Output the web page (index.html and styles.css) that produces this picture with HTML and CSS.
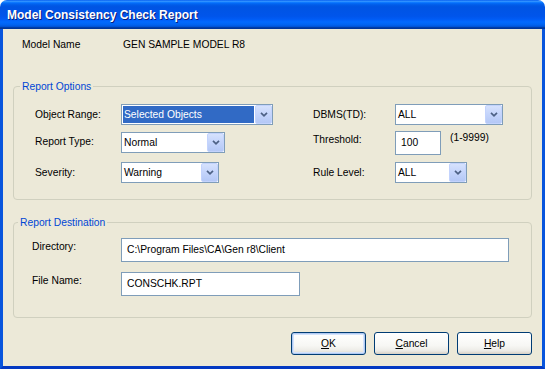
FILE: index.html
```html
<!DOCTYPE html>
<html>
<head>
    <meta charset="UTF-8">
    <title>Model Consistency Check Report</title>
    <link rel="stylesheet" href="styles.css">
</head>
<body>
    <div class="window">
        <div class="titlebar">
            <span class="title">Model Consistency Check Report</span>
        </div>
        <div class="client">
            <div class="model-row">
                <span class="model-label">Model Name</span>
                <span class="model-value">GEN SAMPLE MODEL R8</span>
            </div>

            <fieldset class="group options">
                <legend>Report Options</legend>
                <div class="options-grid">
                    <label class="lbl">Object Range:</label>
                    <div class="cell">
                        <div class="combo w-range">
                            <span class="value selected">Selected Objects</span>
                            <span class="arrow"><svg width="8" height="5" viewBox="0 0 8 5"><path d="M1 0.8L4 3.8L7 0.8" fill="none" stroke="#4D6185" stroke-width="1.7"/></svg></span>
                        </div>
                    </div>
                    <label class="lbl">DBMS(TD):</label>
                    <div class="cell">
                        <div class="combo w-dbms">
                            <span class="value">ALL</span>
                            <span class="arrow"><svg width="8" height="5" viewBox="0 0 8 5"><path d="M1 0.8L4 3.8L7 0.8" fill="none" stroke="#4D6185" stroke-width="1.7"/></svg></span>
                        </div>
                    </div>

                    <label class="lbl">Report Type:</label>
                    <div class="cell">
                        <div class="combo w-type down">
                            <span class="value">Normal</span>
                            <span class="arrow"><svg width="8" height="5" viewBox="0 0 8 5"><path d="M1 0.8L4 3.8L7 0.8" fill="none" stroke="#4D6185" stroke-width="1.7"/></svg></span>
                        </div>
                    </div>
                    <label class="lbl thr">Threshold:</label>
                    <div class="cell thr-cell">
                        <div class="edit w-thr">100</div>
                        <span class="range">(1-9999)</span>
                    </div>

                    <label class="lbl">Severity:</label>
                    <div class="cell">
                        <div class="combo w-sev">
                            <span class="value">Warning</span>
                            <span class="arrow"><svg width="8" height="5" viewBox="0 0 8 5"><path d="M1 0.8L4 3.8L7 0.8" fill="none" stroke="#4D6185" stroke-width="1.7"/></svg></span>
                        </div>
                    </div>
                    <label class="lbl">Rule Level:</label>
                    <div class="cell">
                        <div class="combo w-rule">
                            <span class="value">ALL</span>
                            <span class="arrow"><svg width="8" height="5" viewBox="0 0 8 5"><path d="M1 0.8L4 3.8L7 0.8" fill="none" stroke="#4D6185" stroke-width="1.7"/></svg></span>
                        </div>
                    </div>
                </div>
            </fieldset>

            <fieldset class="group dest">
                <legend>Report Destination</legend>
                <div class="dest-grid">
                    <label class="lbl">Directory:</label>
                    <div class="edit w-dir">C:\Program Files\CA\Gen r8\Client</div>
                    <label class="lbl">File Name:</label>
                    <div class="edit w-file">CONSCHK.RPT</div>
                </div>
            </fieldset>

            <div class="buttons">
                <button class="btn default"><u>O</u>K</button>
                <button class="btn"><u>C</u>ancel</button>
                <button class="btn"><u>H</u>elp</button>
            </div>
        </div>
    </div>
</body>
</html>
```

FILE: styles.css
```css
body {
    margin: 0;
    background-color: #ffffff;
    font-family: "Liberation Sans", Arial, sans-serif;
    font-size: 10.3px;
    color: #000000;
}

.window {
    width: 545px;
    height: 369px;
    display: flex;
    flex-direction: column;
}

.titlebar {
    flex: none;
    height: 29px;
    display: flex;
    align-items: center;
    padding-left: 7px;
    border-radius: 7px 7px 0 0;
    background: linear-gradient(to bottom, #0058ee 0%, #3593ff 4%, #288eff 6%, #127dff 8%, #036ffc 10%, #0262ee 14%, #0057e5 20%, #0054e3 24%, #0055eb 56%, #005bf5 66%, #026afe 76%, #0062ef 86%, #0052d6 92%, #0040ab 94%, #003092 100%);
}

.title {
    color: #ffffff;
    font-weight: bold;
    font-size: 12px;
    text-shadow: 1px 1px 0 #0a1e7a;
}

.client {
    flex: 1;
    display: flex;
    flex-direction: column;
    background-color: #ece9d8;
    border: 3px solid #0855dd;
    border-top: 0;
    border-bottom-color: #0339c2;
    padding: 9px 10px 11px;
}

.model-row {
    display: flex;
    padding-left: 9px;
    line-height: 13px;
}

.model-label {
    width: 101px;
}

/* group boxes */
.group {
    margin: 0;
    padding: 0;
    min-width: 0;
    border: 1px solid #d0d0bf;
    border-radius: 4px;
}

.group legend {
    padding: 0 2px;
    color: #0046d5;
    line-height: 13px;
}

.options {
    margin-top: 29px;
}

.options legend {
    margin-left: 6px;
}

.dest {
    margin-top: 16px;
}

.dest legend {
    margin-left: 4px;
}

.options-grid {
    display: grid;
    grid-template-columns: 86px 192px 82px 1fr;
    grid-template-rows: 21px 25px 21px;
    row-gap: 6px;
    padding: 11px 0 16px 21px;
}

.dest-grid {
    display: grid;
    grid-template-columns: 89px 1fr;
    grid-template-rows: 24px 24px;
    row-gap: 10px;
    padding: 9px 0 21px 18px;
}

.lbl {
    line-height: 13px;
    padding-top: 4px;
}

.lbl.thr {
    padding-top: 2px;
}

.dest-grid .lbl {
    padding-top: 2px;
}

/* combo boxes */
.combo {
    box-sizing: border-box;
    height: 21px;
    display: flex;
    border: 1px solid #7f9db9;
    background-color: #ffffff;
}

.combo.down {
    margin-top: 1px;
}

.combo .value {
    flex: 1;
    margin: 1px;
    padding-left: 1px;
    line-height: 17px;
    white-space: nowrap;
}

.combo .value.selected {
    background-color: #316ac5;
    color: #ffffff;
}

.combo .arrow {
    box-sizing: border-box;
    width: 17px;
    display: flex;
    align-items: center;
    justify-content: center;
    border: 1px solid #c3d3fd;
    border-radius: 2px;
    background: linear-gradient(to bottom, #d6e2fd 0%, #c4d4fb 50%, #b4c8f6 100%);
}

.w-range { width: 152px; }
.w-dbms { width: 108px; }
.w-type { width: 104px; }
.w-sev { width: 98px; }
.w-rule { width: 72px; }

/* edit boxes */
.edit {
    box-sizing: border-box;
    height: 24px;
    border: 1px solid #7f9db9;
    background-color: #ffffff;
    padding-left: 5px;
    line-height: 22px;
    white-space: nowrap;
}

.w-thr { width: 46px; }
.w-dir { width: 388px; }
.w-file { width: 179px; }

.thr-cell {
    display: flex;
    align-items: flex-start;
}

.range {
    margin-left: 9px;
    line-height: 13px;
}

/* buttons */
.buttons {
    display: flex;
    justify-content: flex-end;
    gap: 8px;
    margin-top: 14px;
}

.btn {
    box-sizing: border-box;
    width: 75px;
    height: 23px;
    padding: 0;
    font: inherit;
    color: #000000;
    border: 1px solid #003c74;
    border-radius: 3px;
    background: linear-gradient(to bottom, #ffffff 0%, #f7f7f4 60%, #ecebe6 85%, #d6d0c5 100%);
}

.btn.default {
    box-shadow: inset 0 0 0 1px #b0c9f2, inset 0 0 0 2px #d4e3fb;
}
```
